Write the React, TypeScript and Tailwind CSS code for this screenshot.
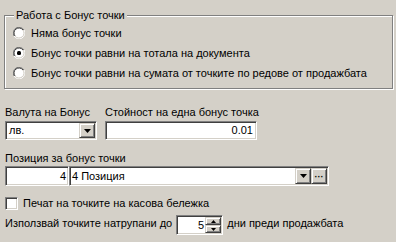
const sunken =
  "border border-t-[#808080] border-l-[#808080] border-b-white border-r-white shadow-[inset_1px_1px_0_#404040,inset_-1px_-1px_0_#d4d0c8] bg-white";
const raised =
  "bg-[#d4d0c8] border border-t-[#d4d0c8] border-l-[#d4d0c8] border-b-[#404040] border-r-[#404040] shadow-[inset_1px_1px_0_#fff,inset_-1px_-1px_0_#808080]";

const Radio = ({ checked, label }: { checked?: boolean; label: string }) => (
  <div className="flex items-center h-[20px] gap-[6px]">
    <svg width="12" height="12" viewBox="0 0 12 12">
      <path d="M11 3A6 6 0 0 0 3 1A6 6 0 0 0 1 9" fill="none" stroke="#808080" />
      <circle cx="6" cy="6" r="5" fill="#fff" />
      <path d="M10 3A5 5 0 0 0 3 2A5 5 0 0 0 2 9" fill="none" stroke="#404040" />
      <path d="M1 9A6 6 0 0 0 9 11A6 6 0 0 0 11 3" fill="none" stroke="#fff" />
      <path d="M2 9A5 5 0 0 0 9 10A5 5 0 0 0 10 3" fill="none" stroke="#d4d0c8" />
      {checked && <rect x="4" y="4" width="4" height="4" rx="1.5" fill="#000" />}
    </svg>
    <span className="whitespace-nowrap">{label}</span>
  </div>
);

const DropArrow = () => (
  <svg width="7" height="4" viewBox="0 0 7 4">
    <path d="M0 0h7L3.5 4z" fill="#000" />
  </svg>
);

const App = () => {
  return (
    <div className="w-[396px] h-[242px] bg-[#d4d0c8] pt-[9px] text-[11px] leading-[13px] text-black font-['Liberation_Sans',Arial,sans-serif] overflow-hidden whitespace-nowrap">
      {/* Group box */}
      <fieldset className="ml-[4px] w-[389px] border border-[#808080] shadow-[inset_1px_1px_0_#fff,1px_1px_0_#fff] pl-[8px] pt-[1px] pb-[5px]">
        <legend className="ml-[1px] px-[2px] bg-[#d4d0c8]">Работа с Бонус точки</legend>
        <Radio label="Няма бонус точки" />
        <Radio checked label="Бонус точки равни на тотала на документа" />
        <Radio label="Бонус точки равни на сумата от точките по редове от продажбата" />
      </fieldset>

      {/* Currency / value */}
      <div className="flex ml-[5px] mt-[17px] gap-[8px]">
        <div className="w-[92px]">
          <div className="h-[13px]">Валута на Бонус</div>
          <div className={`mt-[2px] h-[19px] flex items-center ${sunken}`}>
            <span className="flex-1 pl-[3px]">лв.</span>
            <div className={`w-[16px] h-[15px] mr-[1px] flex items-center justify-center ${raised}`}>
              <DropArrow />
            </div>
          </div>
        </div>
        <div className="w-[152px]">
          <div className="h-[13px]">Стойност на една бонус точка</div>
          <div className={`mt-[2px] h-[19px] flex items-center justify-end pr-[3px] ${sunken}`}>
            0.01
          </div>
        </div>
      </div>

      {/* Position */}
      <div className="ml-[5px] mt-[12px]">
        <div className="h-[13px]">Позиция за бонус точки</div>
        <div className="flex mt-[1px]">
          <div className={`w-[64px] h-[20px] flex items-center justify-end pr-[2px] ${sunken}`}>4</div>
          <div className={`w-[260px] h-[20px] flex items-center ${sunken}`}>
            <span className="flex-1 pl-[2px]">4 Позиция</span>
            <div className={`w-[16px] h-[16px] flex items-center justify-center ${raised}`}>
              <DropArrow />
            </div>
            <div className={`w-[16px] h-[16px] mr-[1px] flex items-end justify-center pb-[3px] ${raised}`}>
              <span className="text-[9px] leading-[6px] font-bold">···</span>
            </div>
          </div>
        </div>
      </div>

      {/* Checkbox */}
      <div className="flex items-center ml-[5px] mt-[11px] h-[13px] gap-[5px]">
        <div className={`w-[13px] h-[13px] ${sunken}`} />
        <span>Печат на точките на касова бележка</span>
      </div>

      {/* Days */}
      <div className="flex items-center ml-[5px] mt-[5px] h-[20px]">
        <span className="-mt-[3px]">Използвай точките натрупани до</span>
        <div className={`ml-[4px] w-[47px] h-[20px] flex items-center ${sunken}`}>
          <span className="flex-1 text-right pr-[1px]">5</span>
          <div className="flex flex-col mr-[1px]">
            <div className={`w-[16px] h-[8px] flex items-center justify-center ${raised}`}>
              <svg width="5" height="3" viewBox="0 0 5 3">
                <path d="M0 3h5L2.5 0z" fill="#000" />
              </svg>
            </div>
            <div className={`w-[16px] h-[8px] flex items-center justify-center ${raised}`}>
              <svg width="5" height="3" viewBox="0 0 5 3">
                <path d="M0 0h5L2.5 3z" fill="#000" />
              </svg>
            </div>
          </div>
        </div>
        <span className="ml-[4px] -mt-[3px]">дни преди продажбата</span>
      </div>
    </div>
  );
};

export default App;
